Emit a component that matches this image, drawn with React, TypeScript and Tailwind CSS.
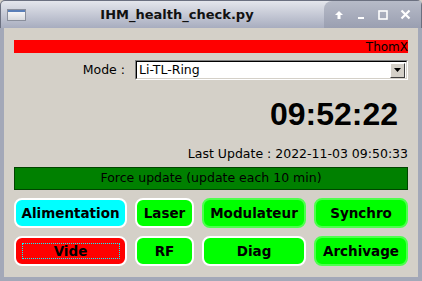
import React from 'react';

const dv = { fontFamily: '"DejaVu Sans", sans-serif' };

function TitleBar() {
  return (
    <div className="relative flex h-[28px] items-center bg-gradient-to-b from-[#e4e6ec] to-[#a8adbf] border-t border-x border-[#6b7080] rounded-t-[5px]">
      {/* app icon */}
      <div className="ml-[6px] flex h-[12px] w-[19px] flex-col border border-[#8a8f9c] bg-gradient-to-b from-[#fdfdfd] to-[#d7d9de]">
        <div className="h-[2px] bg-[#5a7fb8]" />
      </div>
      <div className="flex-1 pl-[4px] text-center text-[13px] font-bold text-[#111]" style={dv}>
        IHM_health_check.py
      </div>
      <div className="flex h-[27px] w-[97px] items-center justify-around self-end rounded-tl-[8px] bg-gradient-to-b from-[#b7bbc8] to-[#9a9fb1] px-[4px] text-white">
        <svg width="10" height="10" viewBox="0 0 10 10">
          <path d="M5 1 L9 5 H6.5 V9 H3.5 V5 H1 Z" fill="white" />
        </svg>
        <svg width="10" height="10" viewBox="0 0 10 10">
          <rect x="2" y="7" width="6" height="2" fill="white" />
        </svg>
        <svg width="10" height="10" viewBox="0 0 10 10">
          <rect x="1" y="1" width="8" height="8" fill="none" stroke="white" strokeWidth="1.6" />
        </svg>
        <svg width="11" height="11" viewBox="0 0 11 11">
          <path d="M1.5 1.5 L9.5 9.5 M9.5 1.5 L1.5 9.5" stroke="white" strokeWidth="2.2" />
        </svg>
      </div>
    </div>
  );
}

function Btn({ label, bg, white, focus }: { label: string; bg: string; white?: boolean; focus?: boolean }) {
  return (
    <div
      className={`flex h-[30px] items-center justify-center rounded-[8px] border-2 text-[13.5px] font-bold text-black ${bg} ${
        white ? 'border-white' : 'border-[#4dff4d]'
      }`}
      style={dv}
    >
      {focus ? (
        <span className="flex h-[16px] w-[98px] items-center justify-center border border-dotted border-[#00ffff]">{label}</span>
      ) : (
        label
      )}
    </div>
  );
}

export default function App() {
  return (
    <div className="flex h-[281px] w-[422px] flex-col bg-[#d4d0c8]">
      <TitleBar />
      <div className="flex flex-1 flex-col border-x-[4px] border-b-[4px] border-[#a3a8b8] px-[10px] pt-[12px]" style={dv}>
        <div className="flex h-[13px] items-center justify-end bg-[#ff0000] text-[12px] leading-none text-black">ThomX</div>
        <div className="mt-[7px] flex items-center">
          <div className="w-[111px] text-right text-[12.5px] text-black">Mode :</div>
          <div className="ml-[10px] flex h-[20px] flex-1 items-center border border-[#808080] border-r-white border-b-white bg-white">
            <div className="flex h-full flex-1 items-center border border-black border-r-[#d4d0c8] border-b-[#d4d0c8] pl-[2px] text-[12.5px] text-black">
              Li-TL-Ring
              <div className="ml-auto mr-[1px] flex h-[15px] w-[15px] items-center justify-center border border-white border-r-[#404040] border-b-[#404040] bg-[#d4d0c8]">
                <svg width="7" height="4" viewBox="0 0 7 4">
                  <path d="M0 0 H7 L3.5 4 Z" fill="black" />
                </svg>
              </div>
            </div>
          </div>
        </div>
        <div className="mt-[17px] text-right text-[32px] font-bold leading-[34px] text-black pr-[10px]" style={{ fontFamily: '"Liberation Sans", Arial, sans-serif' }}>
          09:52:22
        </div>
        <div className="mt-[15px] text-right text-[12.5px] leading-[15px] text-black">Last Update : 2022-11-03 09:50:33</div>
        <div className="mt-[6px] flex h-[23px] items-center justify-center border border-[#004400] bg-[#008000] text-[12.5px] text-black">
          Force update (update each 10 min)
        </div>
        <div className="mt-[8px] grid grid-cols-[113px_59px_104px_94px] gap-x-[8px] gap-y-[8px]">
          <Btn label="Alimentation" bg="bg-[#00ffff]" white />
          <Btn label="Laser" bg="bg-[#00ff00]" white />
          <Btn label="Modulateur" bg="bg-[#00ff00]" />
          <Btn label="Synchro" bg="bg-[#00ff00]" />
          <Btn label="Vide" bg="bg-[#ff0000]" white focus />
          <Btn label="RF" bg="bg-[#00ff00]" white />
          <Btn label="Diag" bg="bg-[#00ff00]" white />
          <Btn label="Archivage" bg="bg-[#00ff00]" />
        </div>
      </div>
    </div>
  );
}
